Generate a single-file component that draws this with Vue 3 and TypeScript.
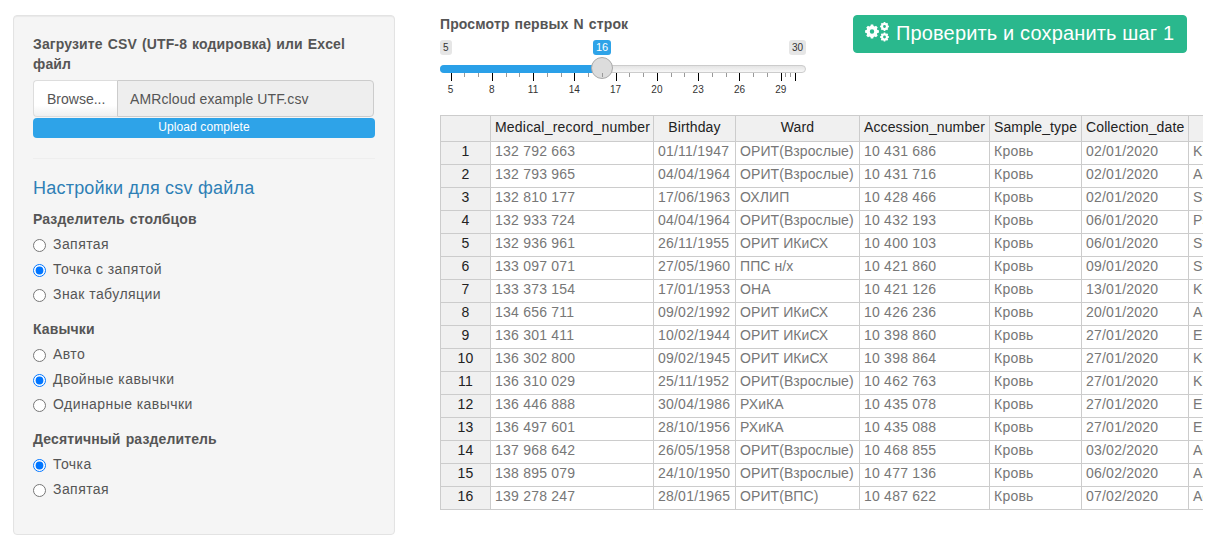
<script setup lang="ts">
import { computed } from "vue";

const separators = ["Запятая", "Точка с запятой", "Знак табуляции"];
const quotes = ["Авто", "Двойные кавычки", "Одинарные кавычки"];
const decimals = ["Точка", "Запятая"];

const columns = [
  "Medical_record_number",
  "Birthday",
  "Ward",
  "Accession_number",
  "Sample_type",
  "Collection_date",
  "",
];

const rows = [
  ["132 792 663", "01/11/1947", "ОРИТ(Взрослые)", "10 431 686", "02/01/2020", "Kl"],
  ["132 793 965", "04/04/1964", "ОРИТ(Взрослые)", "10 431 716", "02/01/2020", "Ac"],
  ["132 810 177", "17/06/1963", "ОХЛИП", "10 428 466", "02/01/2020", "St"],
  ["132 933 724", "04/04/1964", "ОРИТ(Взрослые)", "10 432 193", "06/01/2020", "Ps"],
  ["132 936 961", "26/11/1955", "ОРИТ ИКиСХ", "10 400 103", "06/01/2020", "St"],
  ["133 097 071", "27/05/1960", "ППС н/х", "10 421 860", "09/01/2020", "St"],
  ["133 373 154", "17/01/1953", "ОНА", "10 421 126", "13/01/2020", "Kl"],
  ["134 656 711", "09/02/1992", "ОРИТ ИКиСХ", "10 426 236", "20/01/2020", "Ac"],
  ["136 301 411", "10/02/1944", "ОРИТ ИКиСХ", "10 398 860", "27/01/2020", "En"],
  ["136 302 800", "09/02/1945", "ОРИТ ИКиСХ", "10 398 864", "27/01/2020", "Kl"],
  ["136 310 029", "25/11/1952", "ОРИТ(Взрослые)", "10 462 763", "27/01/2020", "Kl"],
  ["136 446 888", "30/04/1986", "РХиКА", "10 435 078", "27/01/2020", "En"],
  ["136 497 601", "28/10/1956", "РХиКА", "10 435 088", "27/01/2020", "En"],
  ["137 968 642", "26/05/1958", "ОРИТ(Взрослые)", "10 468 855", "03/02/2020", "Ac"],
  ["138 895 079", "24/10/1950", "ОРИТ(Взрослые)", "10 477 136", "06/02/2020", "Ac"],
  ["139 278 247", "28/01/1965", "ОРИТ(ВПС)", "10 487 622", "07/02/2020", "Ac"],
];

// slider geometry: value 5 at 10.5px, one step = 13.76px
const tickX = (v: number) => 10.5 + (v - 5) * 13.76;

const ticks = computed(() => {
  const a: { x: number; major: boolean; label?: number }[] = [];
  for (let v = 5; v <= 29; ++v) {
    const major = (v - 5) % 3 === 0;
    a.push({ x: tickX(v), major, label: major ? v : undefined });
  }
  a.push({ x: tickX(29 + 1 / 3), major: false });
  a.push({ x: tickX(29 + 2 / 3), major: false });
  a.push({ x: tickX(30), major: true });
  return a;
});

function gearPath(cx: number, cy: number, r: number, hole: number, teeth: number) {
  const inner = r * 0.8;
  const step = (Math.PI * 2) / teeth;
  let d = "";
  for (let i = 0; i < teeth; ++i) {
    const a = i * step;
    const pts = [
      [inner, a - step * 0.36],
      [r, a - step * 0.22],
      [r, a + step * 0.22],
      [inner, a + step * 0.36],
    ];
    for (const [rad, ang] of pts) {
      const x = cx + rad * Math.cos(ang);
      const y = cy + rad * Math.sin(ang);
      d += (d ? "L" : "M") + x.toFixed(2) + " " + y.toFixed(2);
    }
  }
  d += "Z";
  d += `M${cx + hole} ${cy}a${hole} ${hole} 0 1 0 ${-2 * hole} 0a${hole} ${hole} 0 1 0 ${2 * hole} 0Z`;
  return d;
}

const gears = [
  gearPath(7, 9.5, 7, 2.2, 8),
  gearPath(19.5, 4.5, 4.5, 1.4, 8),
  gearPath(19.5, 15, 4.5, 1.4, 8),
];
</script>

<template>
  <div class="page">
    <aside class="panel">
      <label class="label">Загрузите CSV (UTF-8 кодировка) или Excel файл</label>
      <div class="file">
        <span class="browse">Browse...</span>
        <span class="filename">AMRcloud example UTF.csv</span>
      </div>
      <div class="progress">Upload complete</div>
      <hr />
      <h4>Настройки для csv файла</h4>

      <div class="group">
        <label class="label">Разделитель столбцов</label>
        <label v-for="(s, i) in separators" class="radio">
          <input type="radio" name="sep" :checked="i === 1" />
          <span>{{ s }}</span>
        </label>
      </div>
      <div class="group">
        <label class="label">Кавычки</label>
        <label v-for="(s, i) in quotes" class="radio">
          <input type="radio" name="quote" :checked="i === 1" />
          <span>{{ s }}</span>
        </label>
      </div>
      <div class="group">
        <label class="label">Десятичный разделитель</label>
        <label v-for="(s, i) in decimals" class="radio">
          <input type="radio" name="dec" :checked="i === 0" />
          <span>{{ s }}</span>
        </label>
      </div>
    </aside>

    <main class="main">
      <div class="top">
        <div class="slider-box">
          <label class="label">Просмотр первых N строк</label>
          <div class="slider">
            <span class="badge min">5</span>
            <span class="badge cur">16</span>
            <span class="badge max">30</span>
            <div class="track"></div>
            <div class="fill"></div>
            <div class="handle"></div>
            <template v-for="t in ticks">
              <i class="tick" :class="{ major: t.major }" :style="{ left: t.x + 'px' }"></i>
              <span v-if="t.label" class="tick-label" :style="{ left: t.x + 'px' }">{{ t.label }}</span>
            </template>
          </div>
        </div>
        <button class="save">
          <svg width="24" height="20" viewBox="0 0 24 20">
            <path v-for="g in gears" :d="g" fill="#fff" fill-rule="evenodd" />
          </svg>
          <span>Проверить и сохранить шаг 1</span>
        </button>
      </div>

      <div class="table-wrap">
        <table>
          <colgroup>
            <col style="width: 50px" />
            <col style="width: 163px" />
            <col style="width: 82px" />
            <col style="width: 124px" />
            <col style="width: 130px" />
            <col style="width: 92px" />
            <col style="width: 107px" />
            <col style="width: 100px" />
          </colgroup>
          <thead>
            <tr>
              <th></th>
              <th v-for="c in columns">{{ c }}</th>
            </tr>
          </thead>
          <tbody>
            <tr v-for="(r, i) in rows">
              <th>{{ i + 1 }}</th>
              <td>{{ r[0] }}</td>
              <td>{{ r[1] }}</td>
              <td class="ward">{{ r[2] }}</td>
              <td>{{ r[3] }}</td>
              <td>Кровь</td>
              <td>{{ r[4] }}</td>
              <td>{{ r[5] }}</td>
            </tr>
          </tbody>
        </table>
      </div>
    </main>
  </div>
</template>

<style scoped>
.page {
  display: flex;
  align-items: flex-start;
  padding: 15px 0 0 13px;
  font-family: "Liberation Sans", Arial, sans-serif;
  font-size: 14px;
  line-height: 20px;
  color: #555;
}

.panel {
  box-sizing: border-box;
  width: 382px;
  height: 520px;
  padding: 18px 19px 19px;
  background: #f5f5f5;
  border: 1px solid #e3e3e3;
  border-radius: 4px;
  box-shadow: inset 0 1px 1px rgba(0, 0, 0, 0.05);
}

.label {
  display: block;
  font-weight: 700;
  letter-spacing: 0.13px;
  word-spacing: 1px;
}

.file {
  display: flex;
  height: 37px;
  margin-top: 6px;
  width: 341px;
}
.browse {
  box-sizing: border-box;
  width: 84px;
  padding: 8px 13px;
  background: linear-gradient(#fff 70%, #f0f0f0);
  border: 1px solid #ddd;
  border-right: none;
  border-radius: 4px 0 0 4px;
  color: #555;
}
.filename {
  flex: 1;
  padding: 8px 12px;
  background: #eee;
  border: 1px solid #ccc;
  border-radius: 0 4px 4px 0;
  letter-spacing: 0.12px;
}

.progress {
  height: 20px;
  margin-top: 1px;
  background: #2ea3e8;
  border-radius: 4px;
  color: #fff;
  font-size: 12px;
  line-height: 18px;
  letter-spacing: 0.1px;
  text-align: center;
}

hr {
  margin: 20px 0 19px;
  border: 0;
  border-top: 1px solid #eee;
}

h4 {
  margin: 0 0 11px;
  font-size: 18px;
  font-weight: 400;
  line-height: 20px;
  letter-spacing: 0.22px;
  color: #2e7fb5;
}

.group {
  margin-bottom: 15px;
}
.radio {
  display: flex;
  align-items: flex-start;
  gap: 7px;
  height: 20px;
  margin-top: 5px;
  letter-spacing: 0.44px;
}
.radio input {
  margin: 5px 0 0;
}

.main {
  width: 763px;
  margin-left: 45px;
}
.top {
  display: flex;
  align-items: flex-start;
}
.slider-box {
  width: 366px;
}
.slider-box .label {
  margin-top: -1px;
}
.slider {
  position: relative;
  height: 69px;
  font-size: 10px;
}
.badge {
  position: absolute;
  top: 6px;
  height: 15px;
  padding: 0 3px;
  border-radius: 3px;
  background: #e6e6e6;
  color: #333;
  font-size: 10px;
  line-height: 15px;
}
.badge.min { left: 0; }
.badge.max { right: 0; }
.badge.cur {
  left: 153px;
  background: #2ea3e8;
  color: #fff;
  font-size: 11px;
}
.track {
  position: absolute;
  top: 31px;
  left: 0;
  right: 0;
  height: 8px;
  box-sizing: border-box;
  border: 1px solid #ccc;
  border-radius: 4px;
  background: linear-gradient(#e4e4e4, #f7f7f7);
}
.fill {
  position: absolute;
  top: 31px;
  left: 0;
  width: 162px;
  height: 8px;
  border-radius: 4px 0 0 4px;
  background: #2aa0e8;
}
.handle {
  position: absolute;
  top: 23px;
  left: 151px;
  box-sizing: border-box;
  width: 22px;
  height: 22px;
  border: 1px solid #aaa;
  border-radius: 50%;
  background: #dcdcdc;
}
.tick {
  position: absolute;
  top: 39px;
  width: 1px;
  height: 4px;
  background: #999;
}
.tick.major {
  height: 8px;
  background: #000;
}
.tick-label {
  position: absolute;
  top: 49px;
  transform: translateX(-50%);
  color: #333;
  line-height: 14px;
}

.save {
  display: flex;
  align-items: center;
  gap: 7px;
  height: 38px;
  margin-left: 47px;
  padding: 0 12px 2px 11px;
  background: #2ab88d;
  border: 1px solid #2ab88d;
  border-radius: 4px;
  color: #fff;
  font-family: inherit;
  font-size: 20px;
  letter-spacing: 0.15px;
}
.save svg {
  margin-top: -2px;
}

.table-wrap {
  width: 763px;
  margin-top: 12px;
  overflow: hidden;
}
table {
  table-layout: fixed;
  width: 848px;
  border-collapse: separate;
  border-spacing: 0;
  border-top: 1px solid #ccc;
  border-left: 1px solid #ccc;
  font-size: 14px;
  line-height: 18px;
  letter-spacing: 0.22px;
}
th,
td {
  box-sizing: border-box;
  height: 23px;
  padding: 0 4px;
  border-right: 1px solid #ccc;
  border-bottom: 1px solid #ccc;
  font-weight: 400;
  vertical-align: top;
  white-space: nowrap;
  overflow: hidden;
}
th {
  background: #f0f0f0;
  color: #222;
  text-align: center;
}
thead th {
  height: 26px;
  line-height: 23px;
  letter-spacing: 0.12px;
}
thead th:nth-child(2) {
  letter-spacing: 0.2px;
}
td {
  color: #777;
  background: #fff;
}
td.ward {
  letter-spacing: 0.08px;
}
</style>

<style>
body {
  background: #fff;
}
</style>
